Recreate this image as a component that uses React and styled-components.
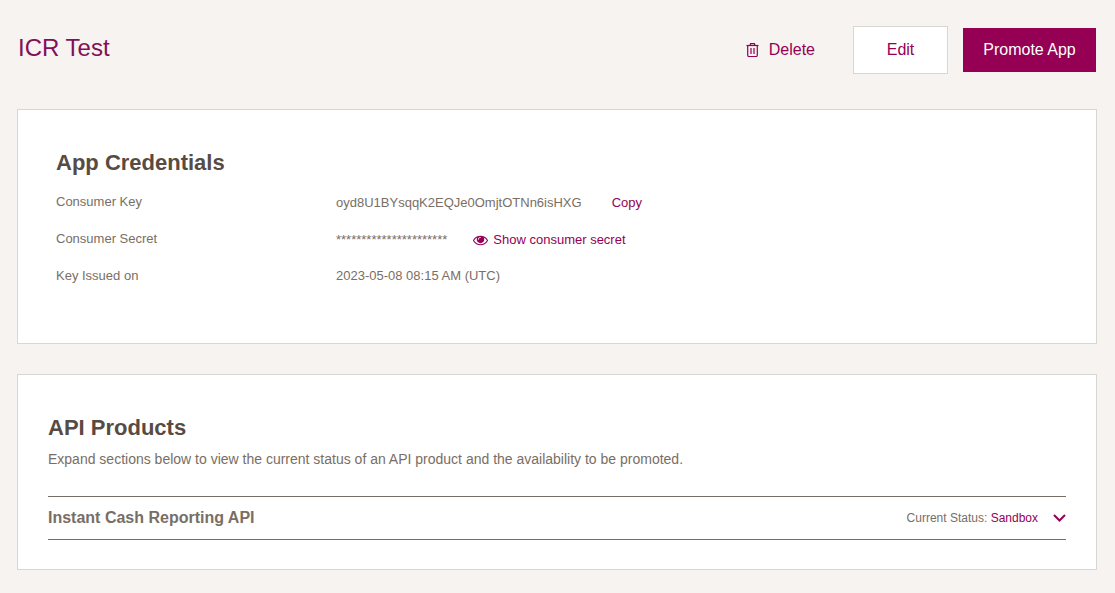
import React, { useState } from 'react';
import styled, { createGlobalStyle } from 'styled-components';

const color = {
  page: '#f6f3f0',
  panel: '#ffffff',
  border: '#d8d7d0',
  brand: '#950054',
  title: '#820f58',
  heading: '#574b43',
  text: '#796e65',
};

const GlobalStyle = createGlobalStyle`
  *, *::before, *::after { box-sizing: border-box; }
  body {
    margin: 0;
    background: ${color.page};
    color: ${color.text};
    font-family: "Liberation Sans", Arial, sans-serif;
    font-size: 13px;
    line-height: 20px;
  }
  button { font: inherit; cursor: pointer; }
`;

const Page = styled.main`
  display: flex;
  flex-direction: column;
  gap: 30px;
  padding: 26px 18px 23px 17px;
`;

const Header = styled.header`
  display: flex;
  justify-content: space-between;
  align-items: flex-start;
  padding: 0 1px 5px;
`;

const Title = styled.h1`
  margin: 0;
  padding-top: 8px;
  color: ${color.title};
  font-size: 24px;
  font-weight: 400;
  line-height: 28px;
`;

const Toolbar = styled.div`
  display: flex;
  align-items: center;
  gap: 15px;
`;

const ToolButton = styled.button`
  min-width: ${(p) => (p.$kind === 'outline' ? 95 : 133)}px;
  height: ${(p) => (p.$kind === 'outline' ? 48 : 44)}px;
  padding: 0 16px;
  border: ${(p) => (p.$kind === 'outline' ? `1px solid ${color.border}` : '0')};
  background: ${(p) => (p.$kind === 'outline' ? color.panel : color.brand)};
  color: ${(p) => (p.$kind === 'outline' ? color.brand : '#ffffff')};
  && { font-size: 16px; }
`;

const TextButton = styled.button`
  display: inline-flex;
  align-items: center;
  gap: ${(p) => p.$gap || 0}px;
  padding: 0;
  border: 0;
  background: none;
  color: ${color.brand};
`;

const DeleteButton = styled(TextButton)`
  margin-right: 23px;
  && { font-size: 16px; }
`;

const Card = styled.section`
  padding: ${(p) => (p.$wide ? '39px 38px 57px' : '39px 30px 29px')};
  border: 1px solid ${color.border};
  background: ${color.panel};
`;

const CardTitle = styled.h2`
  margin: 0;
  color: ${color.heading};
  font-size: 22px;
  font-weight: 700;
  line-height: 28px;
`;

const Details = styled.dl`
  display: flex;
  flex-direction: column;
  gap: 16px;
  margin: 15px 0 0;
`;

const Detail = styled.div`
  display: grid;
  grid-template-columns: 280px 1fr;
  dt, dd { margin: 0; }
`;

const Value = styled.dd`
  display: flex;
  align-items: center;
  gap: ${(p) => p.$gap || 0}px;
  padding-top: ${(p) => (p.$gap ? 1 : 0)}px;
`;

const Intro = styled.p`
  margin: 7px 0 27px;
  font-size: 14px;
`;

const ProductToggle = styled.button`
  display: flex;
  align-items: center;
  justify-content: space-between;
  width: 100%;
  height: 44px;
  padding: 0;
  border: solid ${color.text};
  border-width: 1px 0;
  background: none;
  color: ${color.text};
  text-align: left;
`;

const ProductName = styled.span`
  font-size: 16px;
  font-weight: 700;
`;

const Status = styled.span`
  display: flex;
  align-items: center;
  gap: 15px;
  font-size: 12px;
  b { color: ${color.brand}; font-weight: 400; }
`;

const TrashIcon = () => (
  <svg width="14" height="14" viewBox="0 0 14 14" fill="none" stroke={color.brand} aria-hidden="true">
    <path d="M0.5 2.5h12" strokeWidth="1.2" />
    <path d="M4 2.5L4.600 0.700h3.800L9 2.5" strokeWidth="1.2" />
    <path d="M1.700 2.500v9.800q0 1.200 1.200 1.200h7.200q1.200 0 1.200-1.200V2.500" strokeWidth="1.2" />
    <path d="M5 5v6M8 5v6" strokeWidth="1.2" />
  </svg>
);

const EyeIcon = () => (
  <svg width="15" height="15" viewBox="0 64 1792 1792" fill="currentColor" aria-hidden="true">
    <path d="M1664 960q-152-236-381-353 61 104 61 225 0 185-131.500 316.500t-316.500 131.500-316.500-131.500-131.500-316.500q0-121 61-225-229 117-381 353 133 205 333.500 326.500t434.500 121.500 434.500-121.500 333.500-326.500zm-720-384q0-20-14-34t-34-14q-125 0-214.500 89.500t-89.500 214.500q0 20 14 34t34 14 34-14 14-34q0-86 61-147t147-61q20 0 34-14t14-34zm848 384q0 34-20 69-140 230-376.500 368.500t-499.500 138.500-499.500-139-376.500-368q-20-35-20-69t20-69q140-229 376.500-368t499.500-139 499.500 139 376.500 368q20 35 20 69z" />
  </svg>
);

const ChevronIcon = () => (
  <svg width="13" height="9" viewBox="0 0 13 9" fill="none" stroke={color.brand} strokeWidth="2" aria-hidden="true">
    <path d="M1 1l5.500 5.500L12 1" />
  </svg>
);

export default function App() {
  const [expanded, setExpanded] = useState(false);

  return (
    <>
      <GlobalStyle />
      <Page>
        <Header>
          <Title>ICR Test</Title>
          <Toolbar>
            <DeleteButton type="button" $gap={9}>
              <TrashIcon />
              Delete
            </DeleteButton>
            <ToolButton type="button" $kind="outline">Edit</ToolButton>
            <ToolButton type="button">Promote App</ToolButton>
          </Toolbar>
        </Header>

        <Card $wide>
          <CardTitle>App Credentials</CardTitle>
          <Details>
            <Detail>
              <dt>Consumer Key</dt>
              <Value $gap={30}>
                oyd8U1BYsqqK2EQJe0OmjtOTNn6isHXG
                <TextButton type="button">Copy</TextButton>
              </Value>
            </Detail>
            <Detail>
              <dt>Consumer Secret</dt>
              <Value $gap={26}>
                **********************
                <TextButton type="button" $gap={5}>
                  <EyeIcon />
                  Show consumer secret
                </TextButton>
              </Value>
            </Detail>
            <Detail>
              <dt>Key Issued on</dt>
              <Value>2023-05-08 08:15 AM (UTC)</Value>
            </Detail>
          </Details>
        </Card>

        <Card>
          <CardTitle>API Products</CardTitle>
          <Intro>
            Expand sections below to view the current status of an API product and the availability to be promoted.
          </Intro>
          <ProductToggle type="button" aria-expanded={expanded} onClick={() => setExpanded(!expanded)}>
            <ProductName>Instant Cash Reporting API</ProductName>
            <Status>
              <span>Current Status: <b>Sandbox</b></span>
              <ChevronIcon />
            </Status>
          </ProductToggle>
        </Card>
      </Page>
    </>
  );
}
